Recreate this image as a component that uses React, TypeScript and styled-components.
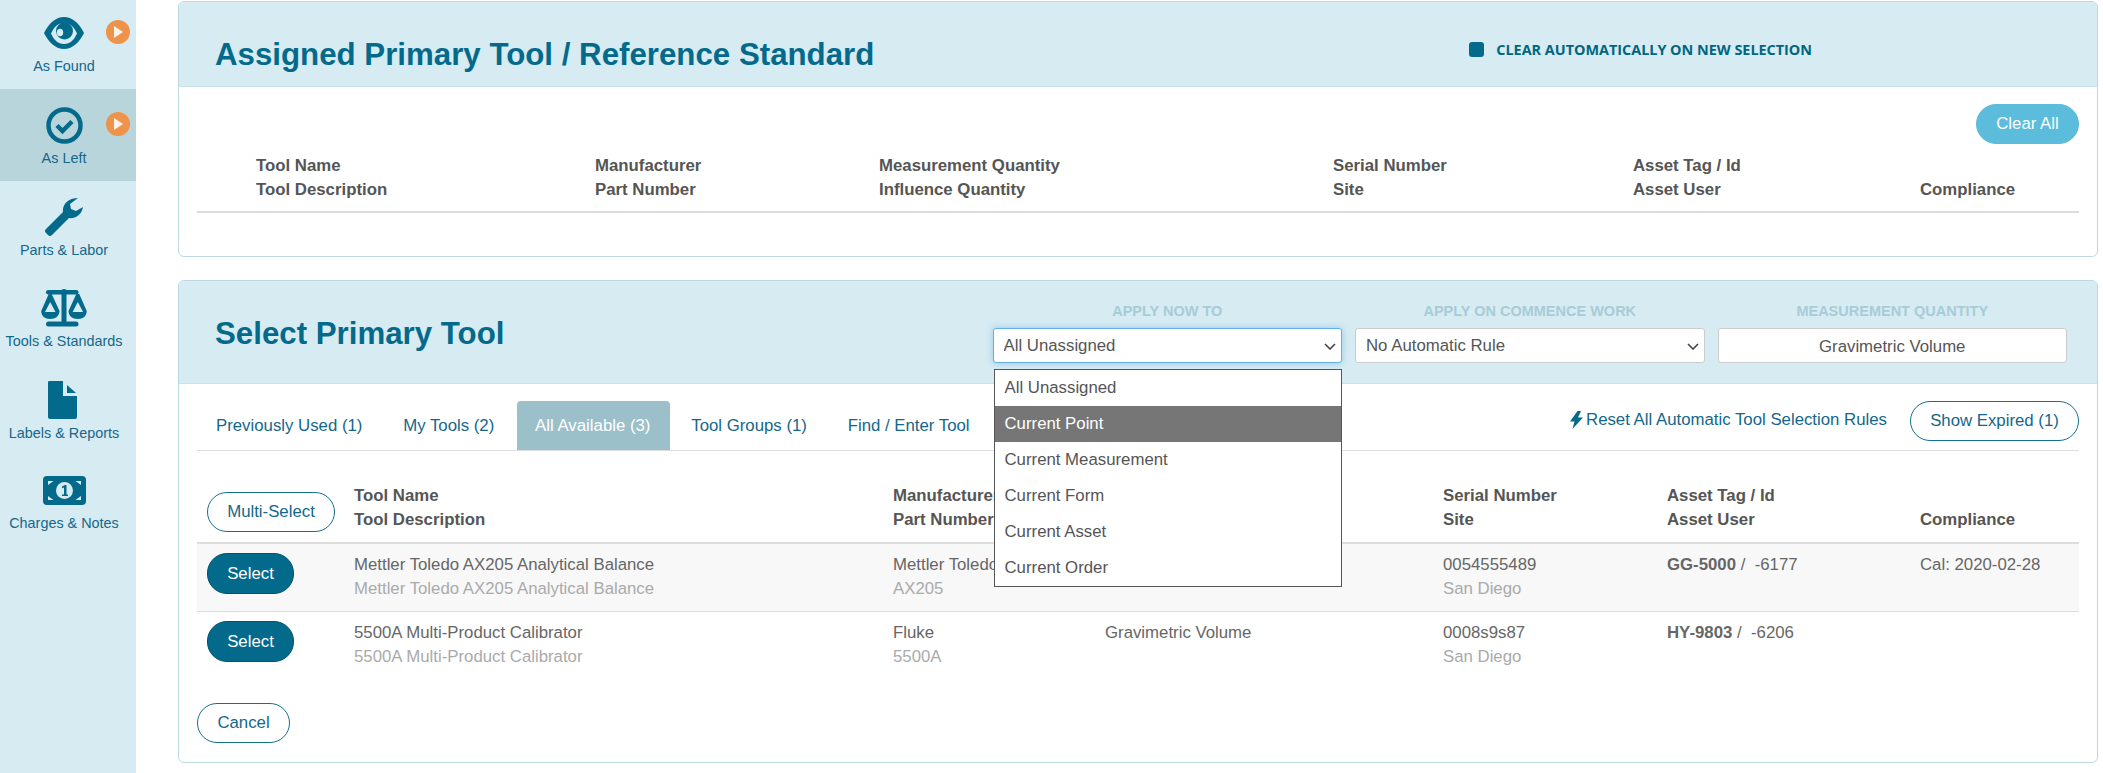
import React from "react";
import styled, { createGlobalStyle } from "styled-components";

const teal = "#036a8c";

const GlobalStyle = createGlobalStyle`
  html, body {
    margin: 0;
    padding: 0;
    background: #fff;
    font-family: "Liberation Sans", Arial, sans-serif;
  }
  * { box-sizing: border-box; }
`;

const Page = styled.div`
  display: flex;
  width: 2103px;
  height: 773px;
  overflow: hidden;
`;

/* sidebar */
const Sidebar = styled.nav`
  width: 136px;
  flex: none;
  background: #d6ebf2;
`;

const NavList = styled.div`
  margin-top: -3px;
`;

const NavItem = styled.div<{ $active?: boolean; $h?: number }>`
  position: relative;
  height: ${(p) => p.$h ?? 92}px;
  padding: 10px 8px 0 0;
  background: ${(p) => (p.$active ? "#b8d5dc" : "transparent")};
  color: #14678a;
  text-align: center;
  font-size: 14.4px;
`;

const NavIcon = styled.div`
  height: 52px;
  display: flex;
  align-items: center;
  justify-content: center;
`;

const NavLabel = styled.div`
  line-height: 14px;
  white-space: nowrap;
`;

const PlayBadge = styled.span`
  position: absolute;
  left: 106px;
  top: 23px;
  width: 24px;
  height: 24px;
  border-radius: 50%;
  background: #ee9349;
  display: flex;
  align-items: center;
  justify-content: center;
`;

/* panels */
const Main = styled.main`
  flex: 1;
  padding: 1px 5px 0 42px;
  min-width: 0;
`;

const Panel = styled.section<{ $gap?: number }>`
  border: 1px solid #bcd9e0;
  border-radius: 6px;
  margin-bottom: ${(p) => p.$gap ?? 0}px;
  background: #fff;
`;

const PanelHeader = styled.header<{ $h: number; $top?: number }>`
  display: flex;
  align-items: center;
  height: ${(p) => p.$h}px;
  padding: ${(p) => p.$top ?? 0}px 0 0 36px;
  background: #d6ebf2;
  border-bottom: 1px solid #c8e2ea;
  border-radius: 5px 5px 0 0;
`;

const Title = styled.h2`
  margin: 3px 0 0;
  font-size: 31.25px;
  font-weight: 700;
  color: #036a8c;
  white-space: nowrap;
`;

const AutoClear = styled.label`
  display: flex;
  align-items: center;
  gap: 12px;
  margin: -7px 285px 0 auto;
  font-family: "Open Sans", sans-serif;
  font-size: 14.4px;
  font-weight: 700;
  color: #006680;
  text-transform: uppercase;
  white-space: nowrap;
`;

const CheckBox = styled.span`
  width: 15px;
  height: 15px;
  border-radius: 3px;
  background: ${teal};
`;

const PanelBody = styled.div`
  padding: 0 18px;
`;

const ClearRow = styled.div`
  display: flex;
  justify-content: flex-end;
  padding-top: 17px;
`;

const Pill = styled.button<{ $variant?: "outline" | "solid" | "sky"; $w: number }>`
  width: ${(p) => p.$w}px;
  height: ${(p) => (p.$variant === "solid" ? 41 : 40)}px;
  padding: 0;
  border-radius: 20px;
  font-family: inherit;
  font-weight: 400;
  font-size: 16.8px;
  flex: none;
  background: ${(p) =>
    p.$variant === "solid" ? teal : p.$variant === "sky" ? "#5bbcdc" : "#fff"};
  color: ${(p) => (p.$variant === "solid" || p.$variant === "sky" ? "#fff" : "#14678a")};
  border: 1px solid
    ${(p) => (p.$variant === "solid" ? "#02536e" : p.$variant === "sky" ? "#5bbcdc" : "#14708f")};
`;

const HeadGrid = styled.div<{ $cols: string }>`
  display: grid;
  grid-template-columns: ${(p) => p.$cols};
  font-size: 16.8px;
  font-weight: 700;
  line-height: 24px;
  color: #555;
`;

const AssignedHead = styled(HeadGrid)`
  margin-top: 10px;
  padding-bottom: 9px;
  margin-bottom: 43px;
  border-bottom: 2px solid #ddd;
`;

const ToolHead = styled(HeadGrid)`
  padding: 33px 0 10px;
  border-bottom: 2px solid #ddd;
`;

const BottomCell = styled.div`
  align-self: end;
`;

/* selector header */
const RuleFields = styled.div`
  display: grid;
  grid-template-columns: repeat(3, 349.5px);
  column-gap: 13px;
  align-self: flex-start;
  margin: 22px 30px 0 auto;
`;

const RuleField = styled.div`
  position: relative;
`;

const RuleLabel = styled.div`
  font-size: 14.5px;
  font-weight: 700;
  line-height: 16px;
  margin-bottom: 9px;
  color: #a8ccd6;
  text-align: center;
  text-transform: uppercase;
`;

const SelectWrap = styled.div`
  position: relative;
`;

const RuleSelect = styled.select<{ $focus?: boolean }>`
  display: block;
  width: 100%;
  height: 35px;
  padding: 0 10px;
  appearance: none;
  font-family: inherit;
  font-size: 16.8px;
  color: #555;
  background: #fff;
  border-radius: 3px;
  border: 1px solid ${(p) => (p.$focus ? "#66afe9" : "#ccc")};
  box-shadow: ${(p) => (p.$focus ? "0 0 6px rgba(102, 175, 233, 0.6)" : "none")};
`;

const Chevron = styled.svg`
  position: absolute;
  right: 6px;
  top: 15px;
  pointer-events: none;
`;

const RuleValue = styled.div`
  height: 35px;
  line-height: 36px;
  font-size: 16.8px;
  color: #555;
  text-align: center;
  background: #fff;
  border: 1px solid #ccc;
  border-radius: 3px;
`;

const Menu = styled.ul`
  position: absolute;
  z-index: 5;
  left: 1px;
  top: 66px;
  width: 348px;
  margin: 0;
  padding: 0;
  list-style: none;
  background: #fff;
  border: 1px solid #555;
`;

const MenuItem = styled.li<{ $hover?: boolean }>`
  height: 36px;
  line-height: 36px;
  padding-left: 10px;
  font-size: 16.8px;
  color: ${(p) => (p.$hover ? "#fff" : "#555")};
  background: ${(p) => (p.$hover ? "#767676" : "transparent")};
`;

/* tabs */
const TabBar = styled.div`
  display: flex;
  padding: 17px 0 0 1px;
  border-bottom: 1px solid #ddd;
`;

const Tab = styled.div<{ $active?: boolean }>`
  height: 49px;
  padding: 0 19.5px 0 18px;
  margin-right: 3.3px;
  line-height: 50px;
  font-size: 16.8px;
  white-space: nowrap;
  border-radius: 4px 4px 0 0;
  color: ${(p) => (p.$active ? "#fff" : "#14678a")};
  background: ${(p) => (p.$active ? "#9bc0ca" : "transparent")};
`;

const TabActions = styled.div`
  display: flex;
  align-items: center;
  align-self: flex-start;
  margin-left: auto;
  height: 40px;
`;

const ResetLink = styled.a`
  display: flex;
  align-items: center;
  gap: 3px;
  margin: 0 23px 3px 0;
  font-size: 16.8px;
  color: #14678a;
  white-space: nowrap;
`;

/* rows */
const ToolRow = styled.div<{ $cols: string; $shaded?: boolean }>`
  display: grid;
  grid-template-columns: ${(p) => p.$cols};
  height: 68px;
  padding-top: 9px;
  font-size: 16.8px;
  line-height: 24px;
  color: #666;
  background: ${(p) => (p.$shaded ? "#f8f8f8" : "#fff")};
  border-bottom: ${(p) => (p.$shaded ? "1px solid #ddd" : "none")};
`;

const SelectCell = styled.div`
  padding-left: 10px;
`;

const MultiCell = styled(SelectCell)`
  padding-top: 8px;
`;

const Sub = styled.div`
  color: #aaa;
`;

const FootRow = styled.div`
  padding: 23px 0 19px;
`;

/* drawings */
const Eye = () => (
  <svg width="40" height="32" viewBox="0 0 40 32">
    <path fill={teal} d="M0 16C5 6 12 0 20 0s15 6 20 16c-5 10-12 16-20 16S5 26 0 16z" />
    <path fill="#d6ebf2" d="M7 16.500c3-6.500 7-10.500 13-10.500s10 4 13 10.500c-3 6.500-7 10.500-13 10.500S10 23 7 16.500z" />
    <circle cx="20.500" cy="14" r="8.500" fill={teal} />
    <ellipse cx="16" cy="15.500" rx="3.200" ry="3.800" fill="#d6ebf2" />
  </svg>
);

const CheckCircle = () => (
  <svg width="37" height="37" viewBox="0 0 37 37">
    <circle cx="18.5" cy="18.5" r="16" fill="none" stroke={teal} strokeWidth="4.5" />
    <path d="M11 18.5l5.5 5.5 9.5-9.5" fill="none" stroke={teal} strokeWidth="4.5" />
  </svg>
);

const Wrench = () => (
  <svg width="38" height="38" viewBox="0 0 38 38">
    <path
      fill={teal}
      d="M33 0C25 0 17 5 18 14L1 31q-2 2 0 4l2 2q2 2 4 0L24 20c7 1 13-4 14-11l-7 4-5-2-1-5z"
    />
  </svg>
);

const Scales = () => (
  <svg width="48" height="38" viewBox="0 0 48 38">
    <g fill={teal}>
      <circle cx="24" cy="3" r="3" />
      <rect x="6" y="1" width="32.500" height="4.500" rx="2.250" />
      <rect x="21.500" y="1" width="5" height="32" />
      <rect x="6" y="32.500" width="32.500" height="5" rx="2.500" />
      <path
        fillRule="evenodd"
        d="M8.700 5h3L19.500 22c0 5-4 8-9.300 8S1.200 27 1.200 22zM10.200 13L5 23h10.500z"
      />
      <path
        fillRule="evenodd"
        d="M36.300 5h3L46.700 22c0 5-3.600 8-8.900 8s-9.300-3-9.300-8zM37.800 13L32.600 23h10.500z"
      />
    </g>
  </svg>
);

const FileSvg = styled.svg`
  margin-right: 3px;
`;

const FileIcon = () => (
  <FileSvg width="29" height="38" viewBox="0 0 29 38">
    <path fill={teal} d="M1 0h14v15h14v21a2 2 0 0 1-2 2H2a2 2 0 0 1-2-2V1a1 1 0 0 1 1-1z" />
    <path fill={teal} d="M19 4l9 8h-9z" />
  </FileSvg>
);

const Money = () => (
  <svg width="43" height="29" viewBox="0 0 43 29">
    <rect width="43" height="29" rx="4" fill={teal} />
    <g fill="#d6ebf2">
      <circle cx="21.500" cy="14.500" r="8.500" />
      <path d="M5 5h5.500l-5.500 4zM38 5h-5.500l5.500 4zM5 24h5.500l-5.500-4zM38 24h-5.500l5.500-4z" />
    </g>
    <path fill={teal} d="M19 10.500l3-1.500h1.500v9.500H25v1.500h-6v-1.500h2v-7l-2 .8z" />
  </svg>
);

const PlayGlyph = () => (
  <svg width="10" height="12" viewBox="0 0 10 12">
    <path d="M1 0l9 6-9 6z" fill="#fdf3ea" />
  </svg>
);

const Bolt = () => (
  <svg width="13" height="18" viewBox="0 0 13 18">
    <path fill={teal} d="M7.500 0L0 10.500h4.500L2.500 18 13 6.500H8L11 0z" />
  </svg>
);

const SelectArrow = () => (
  <Chevron width="12" height="7" viewBox="0 0 12 7">
    <path d="M1 1l5 5 5-5" fill="none" stroke="#444" strokeWidth="1.6" />
  </Chevron>
);

const navItems = [
  { label: "As Found", icon: <Eye />, play: true },
  { label: "As Left", icon: <CheckCircle />, play: true, active: true },
  { label: "Parts & Labor", icon: <Wrench />, h: 91 },
  { label: "Tools & Standards", icon: <Scales /> },
  { label: "Labels & Reports", icon: <FileIcon />, h: 90 },
  { label: "Charges & Notes", icon: <Money /> },
];

const assignedCols = "59px 339px 284px 454px 300px 287px 1fr";
const toolCols = "157px 539px 212px 338px 224px 253px 1fr";

const tabs = ["Previously Used (1)", "My Tools (2)", "All Available (3)", "Tool Groups (1)", "Find / Enter Tool"];
const scopes = ["All Unassigned", "Current Point", "Current Measurement", "Current Form", "Current Asset", "Current Order"];

const tools = [
  {
    name: "Mettler Toledo AX205 Analytical Balance",
    maker: "Mettler Toledo",
    part: "AX205",
    qty: "Gravimetric Volume",
    serial: "0054555489",
    tag: "GG-5000",
    id: "-6177",
    compliance: "Cal: 2020-02-28",
  },
  {
    name: "5500A Multi-Product Calibrator",
    maker: "Fluke",
    part: "5500A",
    qty: "Gravimetric Volume",
    serial: "0008s9s87",
    tag: "HY-9803",
    id: "-6206",
    compliance: "",
  },
];

export default function App() {
  return (
    <Page>
      <GlobalStyle />
      <Sidebar>
        <NavList>
          {navItems.map((item) => (
            <NavItem key={item.label} $active={item.active} $h={item.h}>
              <NavIcon>{item.icon}</NavIcon>
              <NavLabel>{item.label}</NavLabel>
              {item.play && (
                <PlayBadge>
                  <PlayGlyph />
                </PlayBadge>
              )}
            </NavItem>
          ))}
        </NavList>
      </Sidebar>

      <Main>
        <Panel $gap={23}>
          <PanelHeader $h={85} $top={18}>
            <Title>Assigned Primary Tool / Reference Standard</Title>
            <AutoClear>
              <CheckBox />
              Clear Automatically on New Selection
            </AutoClear>
          </PanelHeader>
          <PanelBody>
            <ClearRow>
              <Pill $variant="sky" $w={103}>Clear All</Pill>
            </ClearRow>
            <AssignedHead $cols={assignedCols}>
              <div />
              <div>Tool Name<br />Tool Description</div>
              <div>Manufacturer<br />Part Number</div>
              <div>Measurement Quantity<br />Influence Quantity</div>
              <div>Serial Number<br />Site</div>
              <div>Asset Tag / Id<br />Asset User</div>
              <BottomCell>Compliance</BottomCell>
            </AssignedHead>
          </PanelBody>
        </Panel>

        <Panel>
          <PanelHeader $h={103}>
            <Title>Select Primary Tool</Title>
            <RuleFields>
              <RuleField>
                <RuleLabel>Apply Now To</RuleLabel>
                <SelectWrap>
                  <RuleSelect $focus defaultValue="All Unassigned">
                    <option>All Unassigned</option>
                  </RuleSelect>
                  <SelectArrow />
                </SelectWrap>
                <Menu>
                  {scopes.map((s) => (
                    <MenuItem key={s} $hover={s === "Current Point"}>{s}</MenuItem>
                  ))}
                </Menu>
              </RuleField>
              <RuleField>
                <RuleLabel>Apply on Commence Work</RuleLabel>
                <SelectWrap>
                  <RuleSelect defaultValue="No Automatic Rule">
                    <option>No Automatic Rule</option>
                  </RuleSelect>
                  <SelectArrow />
                </SelectWrap>
              </RuleField>
              <RuleField>
                <RuleLabel>Measurement Quantity</RuleLabel>
                <RuleValue>Gravimetric Volume</RuleValue>
              </RuleField>
            </RuleFields>
          </PanelHeader>
          <PanelBody>
            <TabBar>
              {tabs.map((t) => (
                <Tab key={t} $active={t.startsWith("All")}>{t}</Tab>
              ))}
              <TabActions>
                <ResetLink>
                  <Bolt />
                  Reset All Automatic Tool Selection Rules
                </ResetLink>
                <Pill $w={169}>Show Expired (1)</Pill>
              </TabActions>
            </TabBar>

            <ToolHead $cols={toolCols}>
              <MultiCell>
                <Pill $w={128}>Multi-Select</Pill>
              </MultiCell>
              <div>Tool Name<br />Tool Description</div>
              <div>Manufacturer<br />Part Number</div>
              <div>Measurement Quantity<br />Influence Quantity</div>
              <div>Serial Number<br />Site</div>
              <div>Asset Tag / Id<br />Asset User</div>
              <BottomCell>Compliance</BottomCell>
            </ToolHead>

            {tools.map((tool, i) => (
              <ToolRow key={tool.tag} $cols={toolCols} $shaded={i === 0}>
                <SelectCell>
                  <Pill $variant="solid" $w={87}>Select</Pill>
                </SelectCell>
                <div>{tool.name}<Sub>{tool.name}</Sub></div>
                <div>{tool.maker}<Sub>{tool.part}</Sub></div>
                <div>{tool.qty}</div>
                <div>{tool.serial}<Sub>San Diego</Sub></div>
                <div><b>{tool.tag}</b> /&nbsp; {tool.id}</div>
                <div>{tool.compliance}</div>
              </ToolRow>
            ))}

            <FootRow>
              <Pill $w={93}>Cancel</Pill>
            </FootRow>
          </PanelBody>
        </Panel>
      </Main>
    </Page>
  );
}
